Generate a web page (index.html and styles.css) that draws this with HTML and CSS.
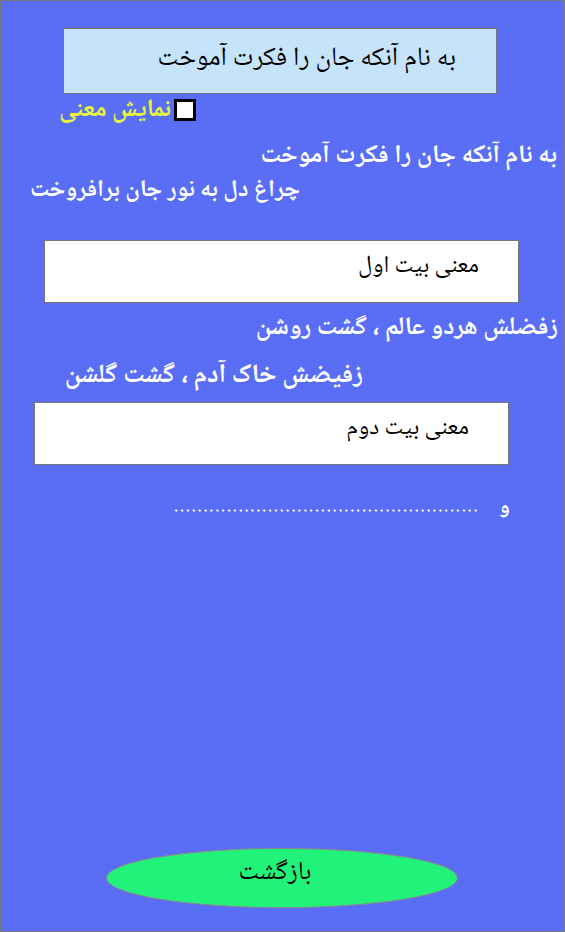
FILE: index.html
```html
<!DOCTYPE html>
<html lang="fa" dir="rtl">
<head>
<meta charset="utf-8">
<title>معنی شعر</title>
<link rel="stylesheet" href="styles.css">
</head>
<body>
<div class="page">
  <div class="title-box">به نام آنکه جان را فکرت آموخت</div>
  <label class="toggle">
    <span class="check"></span>
    <span class="toggle-label">نمایش معنی</span>
  </label>
  <p class="verse verse-1">به نام آنکه جان را فکرت آموخت</p>
  <p class="verse verse-2">چراغ دل به نور جان برافروخت</p>
  <div class="meaning meaning-1">معنی بیت اول</div>
  <p class="verse verse-3">زفضلش هردو عالم ، گشت روشن</p>
  <p class="verse verse-4">زفیضش خاک آدم ، گشت گلشن</p>
  <div class="meaning meaning-2">معنی بیت دوم</div>
  <p class="more"><span class="waw">و</span><span class="dots">....................................................</span></p>
  <div class="spacer"></div>
  <div class="back-row"><button class="back">بازگشت</button></div>
</div>
</body>
</html>
```
FILE: styles.css
```css
html, body {
  margin: 0;
  padding: 0;
}
body {
  font-family: "Noto Naskh Arabic", "Noto Sans Arabic", "DejaVu Sans Condensed", "DejaVu Sans", serif;
}
.page {
  box-sizing: border-box;
  width: 565px;
  height: 932px;
  border: 1px solid #7a7a7a;
  background: #5a6ef5;
  display: flex;
  flex-direction: column;
  direction: rtl;
  white-space: nowrap;
}
.title-box {
  box-sizing: border-box;
  margin: 27px 67px 0 0;
  width: 434px;
  height: 66px;
  background: #c5e3f9;
  border: 1px solid #777;
  color: #000;
  font-size: 26.5px;
  line-height: 62px;
  padding-right: 40px;
}
.toggle {
  display: flex;
  align-items: center;
  gap: 3px;
  margin: 4px 368px 0 0;
  height: 24px;
}
.check {
  box-sizing: border-box;
  flex: none;
  width: 22px;
  height: 22px;
  background: #fff;
  border: 3px solid #000;
}
.toggle-label {
  color: #e9f53c;
  font-weight: bold;
  font-size: 25px;
}
.verse {
  margin: 0;
  color: #fff;
  font-weight: bold;
  font-size: 25.5px;
  line-height: 34px;
}
.verse-1 { margin: 18px 7px 0 0; }
.verse-2 { margin: 0 264px 0 0; font-size: 24px; }
.verse-3 { margin: 9px 6px 0 0; }
.verse-4 { margin: 14px 201px 0 0; font-size: 26.5px; }
.meaning {
  box-sizing: border-box;
  width: 475px;
  height: 63px;
  background: #fff;
  border: 1px solid #777;
  color: #000;
  font-size: 24px;
  line-height: 52px;
  padding-right: 39px;
}
.meaning-1 { margin: 32px 45px 0 0; }
.meaning-2 { margin: 8px 55px 0 0; }
.more {
  margin: 28px 54px 0 0;
  color: #fff;
  font-weight: bold;
  font-size: 22px;
  line-height: 30px;
  display: flex;
  gap: 20px;
}
.dots {
  font-size: 16px;
  letter-spacing: 1.95px;
}
.spacer { flex: 1; }
.back-row {
  display: flex;
  justify-content: flex-start;
  margin: 0 106px 23px 0;
}
.back {
  width: 352px;
  height: 60px;
  border-radius: 50%;
  background: #21f37a;
  border: 1px solid #8a8a8a;
  color: #000;
  font-family: inherit;
  font-size: 26px;
  padding: 0 14px 10px 0;
}
```
